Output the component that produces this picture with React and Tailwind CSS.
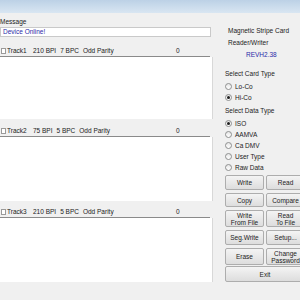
import React from "react";

const font = { fontFamily: '"Liberation Sans", Arial, sans-serif' };

function Radio({ checked, label }) {
  return (
    <div className="flex items-center gap-[3px] h-[11px]">
      <div className="w-[7px] h-[7px] rounded-full border border-[#8e8f8f] bg-gradient-to-b from-[#e6e6e6] to-[#ffffff] flex items-center justify-center">
        {checked && <div className="w-[3px] h-[3px] rounded-full bg-[#1e1e1e]" />}
      </div>
      <span>{label}</span>
    </div>
  );
}

function Btn({ children, className = "" }) {
  return (
    <div
      className={
        "flex flex-col items-center justify-center text-center leading-[7px] border border-[#adadad] rounded-[2px] bg-gradient-to-b from-[#f4f4f4] to-[#dddddd] text-[#222] whitespace-nowrap " +
        className
      }
    >
      {children}
    </div>
  );
}

function TrackHeader({ label, bpi, bpc }) {
  return (
    <div className="flex items-center h-[11px] border-b border-[#8a8a8a] w-[210px] text-[#222] whitespace-nowrap">
      <div className="w-[5px] h-[6px] border border-[#9a9a9a] bg-white ml-[1px] mr-[1px]" />
      <div className="w-[169px] flex gap-[4px]">
        <span className="w-[22px]">{label}</span>
        <span>{bpi}</span>
        <span>{bpc}</span>
        <span>Odd Parity</span>
      </div>
      <span>0</span>
    </div>
  );
}

export default function App() {
  return (
    <div
      className="w-[300px] h-[300px] overflow-hidden bg-[#f0f0f0] flex flex-col text-[6.5px] leading-[8px]"
      style={font}
    >
      <div className="h-[13px] shrink-0 bg-gradient-to-b from-[#bcd1e6] to-[#d9e6f2]" />
      <div className="flex flex-1">
        <div className="w-[213px] shrink-0 flex flex-col">
          <div className="h-[14px] pt-[5px] text-[#222]">Message</div>
          <div className="h-[10px] w-[211px] bg-white border border-[#c9c9c9] text-[#2a2aa8] pl-[2px] flex items-center">
            Device Online!
          </div>
          <div className="h-[9px]" />
          <TrackHeader label="Track1" bpi="210 BPI" bpc="7 BPC" />
          <div className="h-[62px] w-[213px] bg-white border-r border-[#d8d8d8]" />
          <div className="h-[7px]" />
          <TrackHeader label="Track2" bpi="75 BPI" bpc="5 BPC" />
          <div className="h-[64px] w-[213px] bg-white border-r border-[#d8d8d8]" />
          <div className="h-[6px]" />
          <TrackHeader label="Track3" bpi="210 BPI" bpc="5 BPC" />
          <div className="h-[64px] w-[213px] bg-white border-r border-[#d8d8d8]" />
        </div>
        <div className="flex-1 pl-[12px] flex flex-col text-[#222]">
          <div className="pl-[3px] pt-[12px] leading-[12px]">
            <div>Magnetic Stripe Card</div>
            <div>Reader/Writer</div>
            <div className="pl-[18px] text-[#2a2aa8]">REVH2.38</div>
          </div>
          <div className="mt-[9px] h-[11px]">Select Card Type</div>
          <Radio label="Lo-Co" />
          <Radio label="Hi-Co" checked />
          <div className="mt-[4px] h-[11px]">Select Data Type</div>
          <Radio label="ISO" checked />
          <Radio label="AAMVA" />
          <Radio label="Ca DMV" />
          <Radio label="User Type" />
          <Radio label="Raw Data" />
          <div className="mt-[2px] w-[80px] grid grid-cols-2 gap-x-[2px] gap-y-[3px]">
            <Btn className="h-[15px]">Write</Btn>
            <Btn className="h-[15px]">Read</Btn>
            <Btn className="h-[14px]">Copy</Btn>
            <Btn className="h-[14px]">Compare</Btn>
            <Btn className="h-[17px]">
              <span>Write</span>
              <span>From File</span>
            </Btn>
            <Btn className="h-[17px]">
              <span>Read</span>
              <span>To File</span>
            </Btn>
            <Btn className="h-[15px]">Seg.Write</Btn>
            <Btn className="h-[15px]">Setup...</Btn>
            <Btn className="h-[17px]">Erase</Btn>
            <Btn className="h-[17px]">
              <span>Change</span>
              <span>Password</span>
            </Btn>
            <Btn className="h-[16px] col-span-2 -mt-[2px]">Exit</Btn>
          </div>
        </div>
      </div>
    </div>
  );
}
